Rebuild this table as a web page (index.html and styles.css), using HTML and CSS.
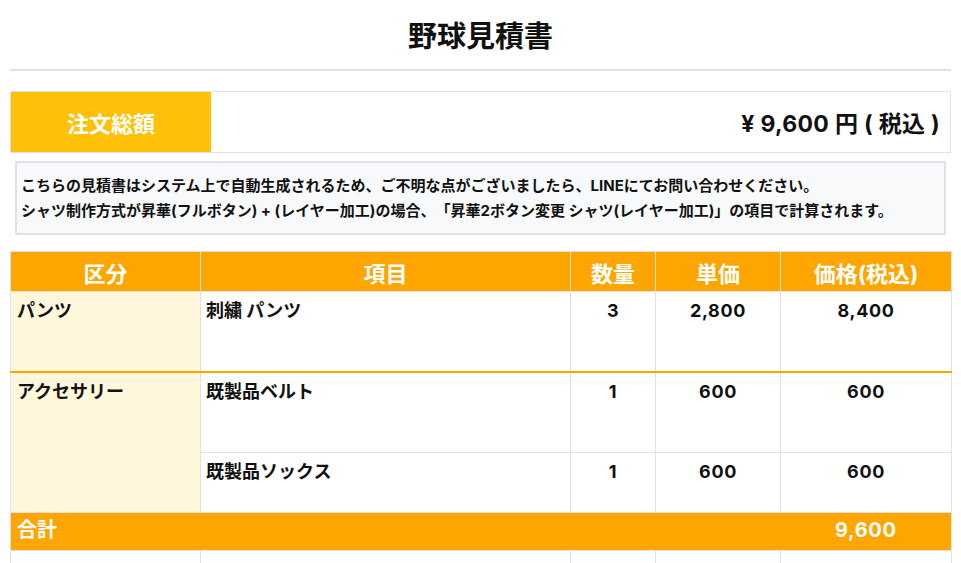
FILE: index.html
```html
<!DOCTYPE html>
<html lang="ja">
<head>
<meta charset="utf-8">
<title>野球見積書</title>
<link rel="stylesheet" href="styles.css">
</head>
<body>
<div class="page">
  <h1 class="title">野球見積書</h1>
  <div class="total-box">
    <div class="total-label">注文総額</div>
    <div class="total-value">¥ 9,600 円 ( 税込 )</div>
  </div>
  <div class="notice">
    <p>こちらの見積書はシステム上で自動生成されるため、ご不明な点がございましたら、LINEにてお問い合わせください。</p>
    <p>シャツ制作方式が昇華(フルボタン) + (レイヤー加工)の場合、「昇華2ボタン変更 シャツ(レイヤー加工)」の項目で計算されます。</p>
  </div>
  <table class="estimate">
    <colgroup>
      <col class="c1"><col class="c2"><col class="c3"><col class="c4"><col class="c5">
    </colgroup>
    <thead>
      <tr>
        <th>区分</th><th>項目</th><th>数量</th><th>単価</th><th>価格(税込)</th>
      </tr>
    </thead>
    <tbody>
      <tr class="row-tall group-end">
        <td class="cat">パンツ</td>
        <td>刺繍 パンツ</td>
        <td class="num">3</td>
        <td class="num">2,800</td>
        <td class="num">8,400</td>
      </tr>
      <tr class="row-tall">
        <td class="cat" rowspan="2">アクセサリー</td>
        <td>既製品ベルト</td>
        <td class="num">1</td>
        <td class="num">600</td>
        <td class="num">600</td>
      </tr>
      <tr class="row-short">
        <td>既製品ソックス</td>
        <td class="num">1</td>
        <td class="num">600</td>
        <td class="num">600</td>
      </tr>
      <tr class="sum-row">
        <td colspan="4">合計</td>
        <td class="num">9,600</td>
      </tr>
      <tr class="tail-row">
        <td></td><td></td><td></td><td></td><td></td>
      </tr>
    </tbody>
  </table>
</div>
</body>
</html>
```
FILE: styles.css
```css
html, body {
  margin: 0;
  padding: 0;
  background: #ffffff;
}
body {
  font-family: Inter, "Noto Sans CJK JP", sans-serif;
  color: #111111;
  text-spacing-trim: space-all;
}
.page {
  padding: 0 10px;
}
.title {
  margin: 0 0 10px;
  padding-top: 15px;
  font-size: 29px;
  line-height: 44px;
  font-weight: 700;
  text-align: center;
  border-bottom: 2px solid #dee2e6;
  padding-bottom: 10px;
}
.total-box {
  margin-top: 20px;
  display: flex;
  border: 1px solid #dee2e6;
  height: 60px;
}
.total-label {
  width: 200px;
  background: #ffc107;
  color: #ffffff;
  font-size: 22px;
  font-weight: 700;
  display: flex;
  align-items: center;
  justify-content: center;
}
.total-value {
  flex: 1;
  display: flex;
  align-items: center;
  justify-content: flex-end;
  padding-right: 10px;
  font-size: 23px;
  letter-spacing: 0.3px;
  word-spacing: 0;
  font-weight: 700;
}
.notice {
  margin: 8px 5px 0;
  background: #f8f9fa;
  border: 2px solid #dee2e6;
  padding: 10px 4px;
  font-size: 15px;
  font-weight: 700;
  line-height: 25px;
}
.notice p {
  margin: 0;
  white-space: nowrap;
}
.estimate {
  margin-top: 16px;
  width: 941px;
  border-collapse: collapse;
  table-layout: fixed;
  border: 1px solid #dee2e6;
}
.c1 { width: 190px; }
.c2 { width: 370px; }
.c3 { width: 85px; }
.c4 { width: 125px; }
.c5 { width: 171px; }
.estimate th {
  background: #ffa500;
  color: #ffffff;
  font-size: 22px;
  font-weight: 700;
  height: 39px;
  padding: 0;
  border-left: 1px solid #dee2e6;
  border-top: 1px solid #dee2e6;
  text-align: center;
  vertical-align: middle;
}
.estimate td {
  font-size: 18px;
  font-weight: 700;
  line-height: 27px;
  padding: 5px 5px 7px;
  vertical-align: top;
  text-align: left;
  border-left: 1px solid #dee2e6;
  border-top: 1px solid #dee2e6;
}
.estimate td.cat {
  background: #fff7dc;
  border-left: none;
  padding-left: 6px;
}
.estimate td.num {
  text-align: center;
  letter-spacing: 0.6px;
}
.row-tall td { height: 67px; }
.row-short td { height: 47px; }
.group-end td {
  border-bottom: 2px solid #ffa500;
}
.sum-row td {
  background: #ffa500;
  color: #ffffff;
  font-size: 20px;
  height: 26px;
  padding: 4px 6px 6px;
  vertical-align: middle;
  border-left: none;
}
.sum-row td:first-child {
  border-left: 1px solid #dee2e6;
}
.tail-row td {
  height: 20px;
}
```
